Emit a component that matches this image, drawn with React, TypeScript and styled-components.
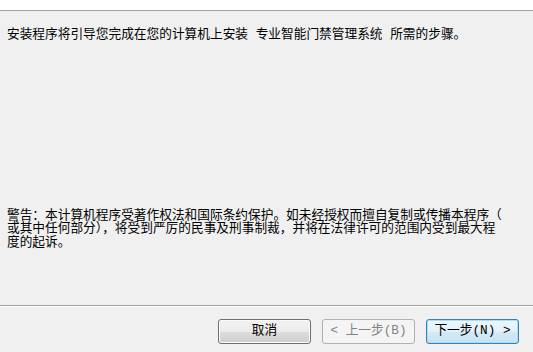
import React from "react";
import styled, { createGlobalStyle } from "styled-components";

const Global = createGlobalStyle`
  html, body { margin: 0; padding: 0; background: #f0f0f0; }
  body { font-family: "Liberation Mono", "Noto Sans CJK SC", monospace; }
`;

const Dialog = styled.div`
  width: 533px;
  height: 352px;
  display: flex;
  flex-direction: column;
  background: #f0f0f0;
  color: #000;
  font-family: "Liberation Mono", "Noto Sans CJK SC", monospace;
  font-size: 12.7px;
  overflow: hidden;
`;

const HeaderStrip = styled.div`
  height: 10px;
  flex: none;
  background: #ffffff;
  border-bottom: 1px solid #a0a0a0;
`;

const Main = styled.div`
  flex: 1;
  display: flex;
  flex-direction: column;
  justify-content: space-between;
  padding: 17px 6px 56px 7px;
`;

const Paragraph = styled.p<{ $lh: number }>`
  margin: 0;
  width: 501px;
  line-height: ${(p) => p.$lh}px;
  line-break: anywhere;
  word-break: break-all;
`;

const Footer = styled.div`
  flex: none;
  height: 47px;
  box-sizing: border-box;
  border-top: 1px solid #a0a0a0;
  box-shadow: inset 0 1px 0 #ffffff;
  display: flex;
  justify-content: flex-end;
  align-items: flex-start;
  gap: 11px;
  padding: 13px 14px 0 0;
`;

const Button = styled.button<{ $variant: "normal" | "disabled" | "default" }>`
  width: 93px;
  height: 25px;
  box-sizing: border-box;
  border-radius: 3px;
  font-family: "Liberation Mono", "Noto Sans CJK SC", monospace;
  font-size: 12.7px;
  line-height: 1;
  padding: 0;
  display: flex;
  align-items: center;
  justify-content: center;
  white-space: pre;
  ${(p) =>
    p.$variant === "normal"
      ? `
    border: 1px solid #707070;
    color: #000;
    background: linear-gradient(#f2f2f2 0%, #ebebeb 50%, #dddddd 51%, #cfcfcf 100%);
    box-shadow: inset 0 0 0 1px #fbfbfb;
  `
      : p.$variant === "disabled"
      ? `
    border: 1px solid #adb2b5;
    color: #838383;
    background: #f4f4f4;
  `
      : `
    border: 1px solid #3c7fb1;
    color: #000;
    background: linear-gradient(#eef7fc 0%, #e1f1fa 50%, #d2eaf7 51%, #c6e3f3 100%);
    box-shadow: inset 0 0 0 1px #a8def7;
  `}
`;

export default function App() {
  return (
    <>
      <Global />
      <Dialog>
        <HeaderStrip />
        <Main>
          <Paragraph $lh={14}>
            安装程序将引导您完成在您的计算机上安装 专业智能门禁管理系统 所需的步骤。
          </Paragraph>
          <Paragraph $lh={13.5}>
            警告：本计算机程序受著作权法和国际条约保护。如未经授权而擅自复制或传播本程序（或其中任何部分），将受到严厉的民事及刑事制裁，并将在法律许可的范围内受到最大程度的起诉。
          </Paragraph>
        </Main>
        <Footer>
          <Button $variant="normal">取消</Button>
          <Button $variant="disabled" disabled>
            {"< 上一步(B)"}
          </Button>
          <Button $variant="default">{"下一步(N) >"}</Button>
        </Footer>
      </Dialog>
    </>
  );
}
